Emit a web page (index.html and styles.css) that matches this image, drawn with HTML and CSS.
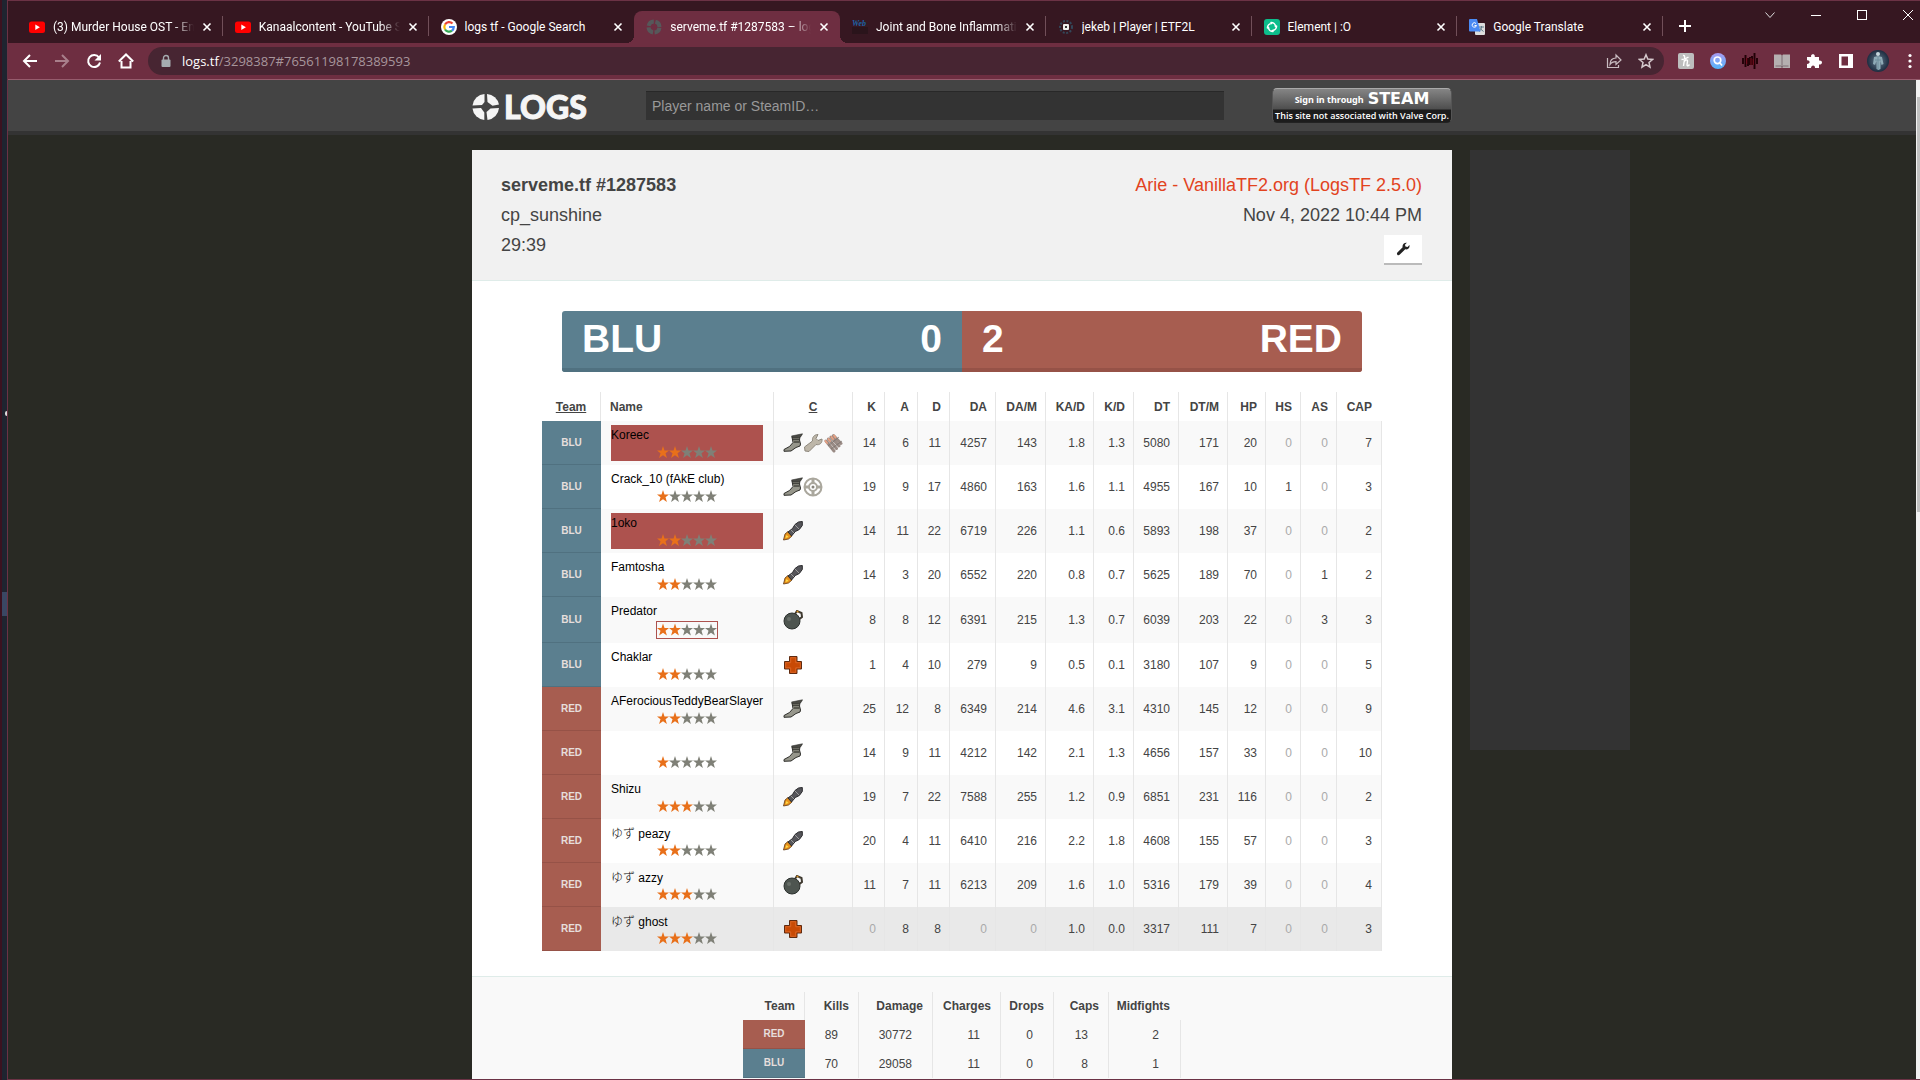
FILE: index.html
```html
<!DOCTYPE html>
<html lang="en">
<head>
<meta charset="utf-8">
<title>serveme.tf #1287583 – logs.tf</title>
<link rel="stylesheet" href="styles.css">
</head>
<body>
<svg class="defs" aria-hidden="true">
  <symbol id="x" viewBox="0 0 10 10"><path d="M1.500 1.500l7 7M8.500 1.500l-7 7" stroke="#fff" stroke-width="1.600"/></symbol>
  <symbol id="yt" viewBox="0 0 16 16"><rect y="2.500" width="16" height="11.500" rx="2.500" fill="#f00"/><path d="M6.300 5.500v5.400l4.600-2.700z" fill="#fff"/></symbol>
  <symbol id="star" viewBox="0 0 12 14"><path d="M6 .6l1.500 4.300H12L8.500 7.800 9.900 12.600 6 9.800l-3.900 2.800 1.400-4.800L0 4.900h4.500z"/></symbol>
  <symbol id="stars1" viewBox="0 0 60 14"><g fill="#e8701a"><use href="#star" width="12" height="14"/></g><g fill="#7f8077"><use href="#star" x="12" width="12" height="14"/><use href="#star" x="24" width="12" height="14"/><use href="#star" x="36" width="12" height="14"/><use href="#star" x="48" width="12" height="14"/></g></symbol>
  <symbol id="stars2" viewBox="0 0 60 14"><g fill="#e8701a"><use href="#star" width="12" height="14"/><use href="#star" x="12" width="12" height="14"/></g><g fill="#7f8077"><use href="#star" x="24" width="12" height="14"/><use href="#star" x="36" width="12" height="14"/><use href="#star" x="48" width="12" height="14"/></g></symbol>
  <symbol id="stars3" viewBox="0 0 60 14"><g fill="#e8701a"><use href="#star" width="12" height="14"/><use href="#star" x="12" width="12" height="14"/><use href="#star" x="24" width="12" height="14"/></g><g fill="#7f8077"><use href="#star" x="36" width="12" height="14"/><use href="#star" x="48" width="12" height="14"/></g></symbol>
  <symbol id="scout" viewBox="0 0 20 20"><path d="M9 4l8-1-.5 4 1 4-.5 2-4 1.500-5 3.500-7 .3v-1.800l5.500-3L10 9.500z" fill="#96968b" stroke="#2e2e2a"/><path d="M8.500 3l11-2.200L18 3.500l-2.500 1.500H9.500z" fill="#4a4a45" stroke="#2e2e2a" stroke-width=".6"/><path d="M10 6.500h6.500M11 9h5.500" stroke="#45453f" stroke-width="1.400"/></symbol>
  <symbol id="wrench" viewBox="0 0 20 20"><path d="M9.500 8c-.5-3.500 1.500-6.500 5.500-6.500l-2 4 2 2 4-1.500c.5 4-2.500 6.500-6 5.500L6 18.500l-4-.5-.5-4z" fill="#bdb6a8" stroke="#8e887d"/></symbol>
  <symbol id="shells" viewBox="0 0 20 20"><g stroke="#9a8b85" stroke-width="3" stroke-linecap="round"><path d="M3 8l8 10M5.500 6l8 9.500M8 4l8 9M10.500 2.500l7.500 8"/></g><g stroke="#e6a184" stroke-width="2" stroke-linecap="round"><path d="M2.500 8l1.500 2M5.500 6L7 8M8.500 4L10 6M11 2.500l1.500 2"/></g><path d="M5 13l11-9M8 16l11-8" stroke="#75706c" stroke-width=".7"/></symbol>
  <symbol id="sight" viewBox="0 0 20 20"><g fill="none" stroke="#aaa79d"><circle cx="10" cy="10" r="8.500" stroke-width="2"/><circle cx="10" cy="10" r="4" stroke-width="2"/><path d="M10 2v5M10 13v5M2 10h5M13 10h5" stroke-width="3"/></g><circle cx="10" cy="10" r="1.500" fill="#88857c"/></symbol>
  <symbol id="rocket" viewBox="0 0 20 20"><path d="M.5 19l1.500-6 3-2.500L9 15l-3.500 3z" fill="#e8921c" stroke="#5d3510" stroke-width=".8"/><path d="M2.500 17l1-3 2 2z" fill="#ffe14d"/><path d="M5 11l4.500-3.500L12 3.500l3.500-2.500 3.800-.5v4l-3 4-4 2L8.500 15z" fill="#55555a" stroke="#29292c"/><path d="M12 4l4 4M8 9l3 3" stroke="#9b9b9b"/></symbol>
  <symbol id="demo" viewBox="0 0 20 20"><circle cx="9" cy="11" r="8" fill="#4e5550" stroke="#2b302d"/><path d="M12 4l2-3 4.500 2 .5 4-2.500 2" fill="none" stroke="#3f3a30" stroke-width="2"/><path d="M13 2l1.500-1.500 1.500 2" fill="#e8b13c" stroke="#8b5b1c"/><circle cx="6" cy="9" r="2" fill="#69706a"/></symbol>
  <symbol id="medic" viewBox="0 0 20 20"><path d="M6.500 1.500h7.500v5h4.500V14H14v4.500H6.500V14H1.500V6.500h5z" fill="#c84a05" stroke="#5f2b10"/><path d="M7.700 2.700h5v5h4.600v5.100h-4.600v4.500h-5v-4.500h-5V7.700h5z" fill="none" stroke="#dc6a2c" stroke-width=".8"/></symbol>
</svg>
<div class="screen">
  <aside class="behind" aria-hidden="true"><i class="bud"></i><i class="block"></i></aside>
  <div class="window">
    <header class="tabstrip">
      <nav class="tabs" aria-label="Tabs">
        <a class="tab" href="#"><svg class="fav"><use href="#yt"/></svg><span class="cap fade">(3) Murder House OST - En</span><svg class="close"><use href="#x"/></svg></a>
        <a class="tab" href="#"><svg class="fav"><use href="#yt"/></svg><span class="cap fade">Kanaalcontent - YouTube S</span><svg class="close"><use href="#x"/></svg></a>
        <a class="tab plain" href="#"><svg class="fav" viewBox="0 0 16 16"><circle cx="8" cy="8" r="8" fill="#fff"/><g fill="none" stroke-width="2.200"><path d="M4 5.500a4.800 4.800 0 0 1 7.500-1" stroke="#ea4335"/><path d="M4 5.500a5 5 0 0 0 0 5" stroke="#fbbc05"/><path d="M4 10.500a4.800 4.800 0 0 0 7 1.200" stroke="#34a853"/><path d="M8 8h4.800a5 5 0 0 1-1.800 3.700" stroke="#4285f4"/></g></svg><span class="cap">logs tf - Google Search</span><svg class="close"><use href="#x"/></svg></a>
        <a class="tab active" href="#"><svg class="fav" viewBox="0 0 16 16"><g fill="none" stroke="#56585a" stroke-width="4"><circle cx="8" cy="8" r="5.500" stroke-dasharray="7 1.640" stroke-dashoffset="-.8"/></g></svg><span class="cap fade">serveme.tf #1287583 – logs</span><svg class="close"><use href="#x"/></svg></a>
        <a class="tab" href="#"><svg class="fav" viewBox="0 0 16 16"><rect y="8" width="16" height="7" fill="#2a141b"/><text x="0" y="7" class="webmd">Web</text></svg><span class="cap fade">Joint and Bone Inflammatic</span><svg class="close"><use href="#x"/></svg></a>
        <a class="tab" href="#"><svg class="fav" viewBox="0 0 16 16"><circle cx="8" cy="8" r="6" fill="none" stroke="#33485a" stroke-width="2" stroke-dasharray="2 1.500"/><rect x="5" y="5" width="6" height="6" rx="1" fill="#eee"/><rect x="7" y="7" width="2" height="2" fill="#333"/></svg><span class="cap">jekeb | Player | ETF2L</span><svg class="close"><use href="#x"/></svg></a>
        <a class="tab" href="#"><svg class="fav" viewBox="0 0 16 16"><rect width="16" height="16" rx="3" fill="#0dbd8b"/><g fill="none" stroke="#fff" stroke-width="1.600" stroke-linecap="round"><path d="M7 3.500a4.300 4.300 0 0 1 4.500 4M12.500 7a4.300 4.300 0 0 1-4 4.500M9 12.500a4.300 4.300 0 0 1-4.500-4M3.500 9a4.300 4.300 0 0 1 4-4.500"/></g></svg><span class="cap">Element | :O</span><svg class="close"><use href="#x"/></svg></a>
        <a class="tab" href="#"><svg class="fav" viewBox="0 0 16 16"><rect x="6" y="4" width="10" height="12" rx="1" fill="#ddd"/><path d="M10 8h5M12.500 7v1c0 2-1 3.500-2.500 4.500M11 9.500l3.500 3" stroke="#607d8b" fill="none"/><path d="M1 0h7l3.500 12.500H1a1 1 0 0 1-1-1V1a1 1 0 0 1 1-1z" fill="#4a8af4"/><path d="M7 4.500A2.200 2.200 0 1 0 7.500 6.500H5.500" fill="none" stroke="#fff"/></svg><span class="cap">Google Translate</span><svg class="close"><use href="#x"/></svg></a>
      </nav>
      <button class="newtab" aria-label="New tab"><svg width="14" height="14"><path d="M7 1v12M1 7h12" stroke="#fff" stroke-width="2"/></svg></button>
      <div class="winctl">
        <button aria-label="Search tabs"><svg width="12" height="12"><path d="M1.500 3.500L6 8.500l4.500-5" fill="none" stroke="#ddd"/></svg></button>
        <button aria-label="Minimize"><svg width="12" height="12"><path d="M1 6.500h10" stroke="#fff"/></svg></button>
        <button aria-label="Maximize"><svg width="12" height="12"><rect x="1.500" y="1.500" width="9" height="9" fill="none" stroke="#fff"/></svg></button>
        <button aria-label="Close"><svg width="12" height="12"><path d="M1 1l10 10M11 1L1 11" stroke="#fff"/></svg></button>
      </div>
    </header>
    <div class="toolbar">
      <button aria-label="Back"><svg viewBox="0 0 16 16"><path d="M15 8H2M8 2L2 8l6 6" fill="none" stroke="#fff" stroke-width="2"/></svg></button>
      <button aria-label="Forward"><svg viewBox="0 0 16 16"><path d="M1 8h13M8 2l6 6-6 6" fill="none" stroke="#a97f8b" stroke-width="2"/></svg></button>
      <button aria-label="Reload"><svg viewBox="0 0 16 16"><path d="M13 4.500A6 6 0 1 0 14 9.500" fill="none" stroke="#fff" stroke-width="2"/><path d="M15 1v6.500H8.500z" fill="#fff"/></svg></button>
      <button aria-label="Home"><svg viewBox="0 0 16 16"><path d="M3.500 8v6.500h9V8M.8 8.500L8 1.500l7.200 7" fill="none" stroke="#fff" stroke-width="2"/></svg></button>
      <div class="omnibox">
        <svg class="lock" viewBox="0 0 10 14"><path d="M2.500 6V4a2.500 2.500 0 0 1 5 0v2" fill="none" stroke="#a5acb0" stroke-width="1.400"/><rect x=".5" y="5.500" width="9" height="7.500" rx="1" fill="#a5acb0"/></svg>
        <span class="url"><b>logs.tf</b>/3298387#76561198178389593</span>
        <svg class="ic" viewBox="0 0 16 16"><path d="M1.500 5v9.500h11V12" fill="none" stroke="#c9bcc1" stroke-width="1.200"/><path d="M4 11.500c0-4 2-6.500 6-6.500V2l5 5-5 4.500V8.700C7.500 8.700 5.500 9 4 11.500z" fill="none" stroke="#c9bcc1" stroke-width="1.200"/></svg>
        <svg class="ic" viewBox="0 0 16 16"><path d="M8 1.800l1.800 4.300 4.700.4-3.500 3 1 4.600-4-2.500-4 2.500 1-4.600-3.500-3 4.700-.4z" fill="none" stroke="#d5c9cd" stroke-width="1.500"/></svg>
      </div>
      <div class="exts">
        <svg viewBox="0 0 16 16"><rect width="16" height="16" rx="2" fill="#bdbdbd"/><path d="M5 2.500c1.500-.5 2 1 1.500 3.500L5.500 13M6 9c1-2 3.500-3 3.500-1L9 12c.2 1.200 1.500 1 2.500-.5M3.500 6.500c2.500 0 5-1 7-2.500" fill="none" stroke="#fff" stroke-width="1.400"/></svg>
        <svg viewBox="0 0 16 16"><defs><linearGradient id="q" x2="0" y2="1"><stop stop-color="#a99af0"/><stop offset="1" stop-color="#52b4fa"/></linearGradient></defs><circle cx="8" cy="8" r="8" fill="url(#q)"/><circle cx="7.500" cy="7.300" r="3.300" fill="none" stroke="#fff" stroke-width="1.700"/><path d="M10 10l2 2.500" stroke="#fff" stroke-width="1.700"/></svg>
        <svg viewBox="0 0 16 16"><path d="M1 5v6M3.500 2v12M6 5v8M8 4v8M10 3v9M12.500 0v16M15 5v6" stroke="#210006" stroke-width="1.900"/><path d="M4.700 5v6M9 5v7M11.200 6v6" stroke="#7b0c1c"/></svg>
        <svg viewBox="0 0 16 16"><path d="M0 1.500h7l1 1 1-1h7V15H9l-1-.8L7 15H0z" fill="#b5afb0"/><path d="M1.500 13h5.500l1 1 1-1h5.500M8 2v12" fill="none" stroke="#7d6d72"/></svg>
        <svg viewBox="0 0 16 16"><path d="M1 4h4.200C4 1 9 0 8.800 3.500V4H13v3.500c4-.5 4 4.200 0 4V15H9c.3-3.500-4-3.500-4 0H1v-4c3.500 0 3.500-4 0-3.800z" fill="#fff"/></svg>
        <svg viewBox="0 0 16 16"><path d="M1 1h14v14H1zM3.500 3.500v9H10v-9z" fill="#fff" fill-rule="evenodd"/></svg>
        <svg class="avatar" viewBox="0 0 22 22"><defs><radialGradient id="av"><stop stop-color="#63798a"/><stop offset="1" stop-color="#1d2c40"/></radialGradient></defs><circle cx="11" cy="11" r="11" fill="url(#av)"/><circle cx="11" cy="4" r="2" fill="#c5d6dc"/><path d="M7 7l4-1 4 1 1.500 7-2 1-1-4v8l-2 1-2-1v-8l-1.500 4-2-1z" fill="#8fabb7"/><path d="M11 6v13M8 10h6" stroke="#6f8d9b"/></svg>
        <svg viewBox="0 0 16 16"><g fill="#fff"><circle cx="8" cy="2.500" r="1.600"/><circle cx="8" cy="8" r="1.600"/><circle cx="8" cy="13.500" r="1.600"/></g></svg>
      </div>
    </div>
    <div class="viewport">
      <div class="site">
        <header class="topbar">
          <div class="topinner">
            <a class="logo" href="#"><svg viewBox="0 0 28 28"><g fill="#f5f5f5"><path d="M12.500 1a13 13 0 0 0-12 11.500l9.500-.5 2.500-3z"/><path d="M15 1a13 13 0 0 1 12 10.500l-6.500 1.300L15.500 9z"/><path d="M.5 15.500A13 13 0 0 0 12.300 27v-7.500L9 15z"/><path d="M27 15a13 13 0 0 1-11.500 12l-1-8 4-3.500z"/></g></svg><span>LOGS</span></a>
            <input class="search" type="text" placeholder="Player name or SteamID…" aria-label="Player name or SteamID">
            <a class="steam" href="#"><span class="s1">Sign in through <b>STEAM</b></span><span class="s2">This site not associated with Valve Corp.</span></a>
          </div>
        </header>
        <div class="columns">
          <main class="card">
            <section class="info">
              <div><h1>serveme.tf #1287583</h1><p>cp_sunshine</p><p>29:39</p></div>
              <div class="right"><a href="#">Arie - VanillaTF2.org (LogsTF 2.5.0)</a><p>Nov 4, 2022 10:44 PM</p>
                <button class="tool" aria-label="Settings"><svg width="14" height="14" viewBox="0 0 20 20"><path d="M9.500 7.500c-1-3.500 2-7 6-6.500l-2.700 3 .7 2.500 3 .5 2.700-2.700c1 4-2.500 7.200-6 6.200L5.500 18c-2.500 2.500-5.500-.5-3.500-3z" fill="#222"/></svg></button></div>
            </section>
            <section class="body">
              <div class="score"><div class="blu"><span>BLU</span><span>0</span></div><div class="red"><span>2</span><span>RED</span></div></div>
              <table class="players">
                <colgroup><col class="w59"><col class="w173"><col class="w79"><col class="w32"><col class="w33"><col class="w32"><col class="w46"><col class="w50"><col class="w48"><col class="w40"><col class="w45"><col class="w49"><col class="w38"><col class="w35"><col class="w36"><col class="w45"></colgroup>
                <thead><tr><th class="c u">Team</th><th class="l">Name</th><th class="c u">C</th><th>K</th><th>A</th><th>D</th><th>DA</th><th>DA/M</th><th>KA/D</th><th>K/D</th><th>DT</th><th>DT/M</th><th>HP</th><th>HS</th><th>AS</th><th>CAP</th></tr></thead>
                <tbody>
                <tr><td class="team blu">BLU</td><td class="name"><a class="mark" href="#">Koreec<svg class="stars"><use href="#stars2"/></svg></a></td><td class="cls"><svg><use href="#scout"/></svg><svg><use href="#wrench"/></svg><svg><use href="#shells"/></svg></td><td>14</td><td>6</td><td>11</td><td>4257</td><td>143</td><td>1.8</td><td>1.3</td><td>5080</td><td>171</td><td>20</td><td class="z">0</td><td class="z">0</td><td>7</td></tr>
                <tr><td class="team blu">BLU</td><td class="name"><a href="#">Crack_10 (fAkE club)<svg class="stars"><use href="#stars1"/></svg></a></td><td class="cls"><svg><use href="#scout"/></svg><svg><use href="#sight"/></svg></td><td>19</td><td>9</td><td>17</td><td>4860</td><td>163</td><td>1.6</td><td>1.1</td><td>4955</td><td>167</td><td>10</td><td>1</td><td class="z">0</td><td>3</td></tr>
                <tr><td class="team blu">BLU</td><td class="name"><a class="mark" href="#">1oko<svg class="stars"><use href="#stars2"/></svg></a></td><td class="cls"><svg><use href="#rocket"/></svg></td><td>14</td><td>11</td><td>22</td><td>6719</td><td>226</td><td>1.1</td><td>0.6</td><td>5893</td><td>198</td><td>37</td><td class="z">0</td><td class="z">0</td><td>2</td></tr>
                <tr><td class="team blu">BLU</td><td class="name"><a href="#">Famtosha<svg class="stars"><use href="#stars2"/></svg></a></td><td class="cls"><svg><use href="#rocket"/></svg></td><td>14</td><td>3</td><td>20</td><td>6552</td><td>220</td><td>0.8</td><td>0.7</td><td>5625</td><td>189</td><td>70</td><td class="z">0</td><td>1</td><td>2</td></tr>
                <tr><td class="team blu">BLU</td><td class="name"><a href="#">Predator<svg class="stars boxed"><use href="#stars2"/></svg></a></td><td class="cls"><svg><use href="#demo"/></svg></td><td>8</td><td>8</td><td>12</td><td>6391</td><td>215</td><td>1.3</td><td>0.7</td><td>6039</td><td>203</td><td>22</td><td class="z">0</td><td>3</td><td>3</td></tr>
                <tr><td class="team blu">BLU</td><td class="name"><a href="#">Chaklar<svg class="stars"><use href="#stars2"/></svg></a></td><td class="cls"><svg><use href="#medic"/></svg></td><td>1</td><td>4</td><td>10</td><td>279</td><td>9</td><td>0.5</td><td>0.1</td><td>3180</td><td>107</td><td>9</td><td class="z">0</td><td class="z">0</td><td>5</td></tr>
                <tr><td class="team red">RED</td><td class="name"><a href="#">AFerociousTeddyBearSlayer<svg class="stars"><use href="#stars2"/></svg></a></td><td class="cls"><svg><use href="#scout"/></svg></td><td>25</td><td>12</td><td>8</td><td>6349</td><td>214</td><td>4.6</td><td>3.1</td><td>4310</td><td>145</td><td>12</td><td class="z">0</td><td class="z">0</td><td>9</td></tr>
                <tr><td class="team red">RED</td><td class="name"><a href="#">&nbsp;<svg class="stars"><use href="#stars1"/></svg></a></td><td class="cls"><svg><use href="#scout"/></svg></td><td>14</td><td>9</td><td>11</td><td>4212</td><td>142</td><td>2.1</td><td>1.3</td><td>4656</td><td>157</td><td>33</td><td class="z">0</td><td class="z">0</td><td>10</td></tr>
                <tr><td class="team red">RED</td><td class="name"><a href="#">Shizu<svg class="stars"><use href="#stars3"/></svg></a></td><td class="cls"><svg><use href="#rocket"/></svg></td><td>19</td><td>7</td><td>22</td><td>7588</td><td>255</td><td>1.2</td><td>0.9</td><td>6851</td><td>231</td><td>116</td><td class="z">0</td><td class="z">0</td><td>2</td></tr>
                <tr><td class="team red">RED</td><td class="name"><a href="#"><span><i lang="ja">ゆず</i> peazy</span><svg class="stars"><use href="#stars2"/></svg></a></td><td class="cls"><svg><use href="#rocket"/></svg></td><td>20</td><td>4</td><td>11</td><td>6410</td><td>216</td><td>2.2</td><td>1.8</td><td>4608</td><td>155</td><td>57</td><td class="z">0</td><td class="z">0</td><td>3</td></tr>
                <tr><td class="team red">RED</td><td class="name"><a href="#"><span><i lang="ja">ゆず</i> azzy</span><svg class="stars"><use href="#stars3"/></svg></a></td><td class="cls"><svg><use href="#demo"/></svg></td><td>11</td><td>7</td><td>11</td><td>6213</td><td>209</td><td>1.6</td><td>1.0</td><td>5316</td><td>179</td><td>39</td><td class="z">0</td><td class="z">0</td><td>4</td></tr>
                <tr class="hover"><td class="team red">RED</td><td class="name"><a href="#"><span><i lang="ja">ゆず</i> ghost</span><svg class="stars"><use href="#stars3"/></svg></a></td><td class="cls"><svg><use href="#medic"/></svg></td><td class="z">0</td><td>8</td><td>8</td><td class="z">0</td><td class="z">0</td><td>1.0</td><td>0.0</td><td>3317</td><td>111</td><td>7</td><td class="z">0</td><td class="z">0</td><td>3</td></tr>
                </tbody>
              </table>
            </section>
            <section class="totals">
              <table>
                <colgroup><col class="w62"><col class="w54"><col class="w74"><col class="w68"><col class="w53"><col class="w55"><col class="w72"></colgroup>
                <thead><tr><th>Team</th><th>Kills</th><th>Damage</th><th>Charges</th><th>Drops</th><th>Caps</th><th>Midfights</th></tr></thead>
                <tbody>
                <tr><td class="team red">RED</td><td>89</td><td>30772</td><td>11</td><td>0</td><td>13</td><td>2</td></tr>
                <tr><td class="team blu">BLU</td><td>70</td><td>29058</td><td>11</td><td>0</td><td>8</td><td>1</td></tr>
                </tbody>
              </table>
            </section>
          </main>
          <aside class="ad"></aside>
        </div>
      </div>
      <div class="scroll"><i></i></div>
    </div>
  </div>
</div>
</body>
</html>
```
FILE: styles.css
```css
* { box-sizing: border-box; }
body { margin: 0; font: 12px/18px "Liberation Sans", Arial, "Noto Sans CJK JP", sans-serif; color: #444; }
a { color: inherit; text-decoration: none; }
button { border: 0; padding: 0; background: none; display: flex; align-items: center; justify-content: center; }
svg { flex: none; }
h1, p { margin: 0; font-size: inherit; }
.defs { position: absolute; width: 0; height: 0; }

.screen { display: flex; height: 100vh; overflow: hidden; }
.behind { flex: 0 0 7px; background: #1f2430; border-left: 2px solid #3b1220; display: flex; flex-direction: column; align-items: flex-end; }
.bud { width: 2px; height: 5px; margin-top: 411px; background: #ddd; border-radius: 2px 0 0 2px; }
.block { width: 5px; height: 24px; margin-top: 176px; background: #3a4763; }
.window { flex: 1; min-width: 0; display: flex; flex-direction: column; border: 1px solid #6b3245; border-right: 0; }

.tabstrip { height: 42px; flex: none; background: #361721; display: flex; padding-left: 9px; font: 12px/16px Roboto, "Open Sans", sans-serif; color: #fff; }
.tabs { display: flex; flex: 0 1 1646px; padding-top: 10px; min-width: 0; }
.tab { flex: 1; min-width: 0; display: flex; align-items: center; gap: 8px; padding: 0 11px 0 12px; position: relative; }
.tab::after { content: ""; position: absolute; right: 0; top: 5px; width: 1px; height: 20px; background: #714f59; }
.tab.plain::after { display: none; }
.tab.active { background: #6e2e41; border-radius: 8px 8px 0 0; }
.tab.active::before, .tab.active::after { content: ""; position: absolute; top: auto; bottom: 0; width: 8px; height: 8px; }
.tab.active::before { left: -8px; background: radial-gradient(circle at 0 0, #361721 8px, #6e2e41 8px); }
.tab.active::after { right: -8px; background: radial-gradient(circle at 100% 0, #361721 8px, #6e2e41 8px); }
.fav { width: 16px; height: 16px; }
.webmd { font: italic bold 8px "Liberation Serif", serif; fill: #1c62a5; }
.cap { flex: 1; white-space: nowrap; overflow: hidden; }
.fade { -webkit-mask-image: linear-gradient(90deg, #000 calc(100% - 20px), transparent); mask-image: linear-gradient(90deg, #000 calc(100% - 20px), transparent); }
.close { width: 10px; height: 10px; }
.newtab { width: 44px; padding-top: 8px; }
.winctl { margin: 0 -11px 0 auto; display: flex; height: 28px; }
.winctl button { width: 46px; }

.toolbar { height: 37px; flex: none; background: #6e2e41; border-bottom: 1px solid #965c6d; display: flex; align-items: center; gap: 16px; padding: 0 2px 0 14px; }
.toolbar button, .toolbar button svg, .exts svg, .ic { width: 16px; height: 16px; }
.omnibox { flex: 1; height: 28px; border-radius: 14px; background: #472532; display: flex; align-items: center; gap: 16px; padding: 0 10px 0 13px; margin: 0 -2px; }
.lock { width: 10px; height: 14px; }
.url { flex: 1; margin-left: -5px; font: 13px/18px "Open Sans", "Noto Sans", sans-serif; color: #a8969c; }
.url b { font-weight: 400; color: #fff; }
.exts { display: flex; gap: 16px; align-items: center; }
.exts .avatar { width: 22px; height: 22px; margin: 0 -3px; }

.viewport { flex: 1; min-height: 0; display: flex; overflow: hidden; }
.site { flex: 1; min-width: 0; background: #292a24; overflow: hidden; }
.scroll { flex: 0 0 4px; background: #f1f1f1; padding: 17px 0 0 1px; }
.scroll i { display: block; height: 415px; background: #c1c1c1; }

.topbar { background: #444; border-bottom: 4px solid #333; }
.topinner { max-width: 980px; height: 51px; margin: 0 auto; display: flex; align-items: center; }
.logo { flex: 0 0 174px; display: flex; align-items: center; gap: 4px; padding-top: 2px; color: #f5f5f5; font: 900 32px/32px Lato, sans-serif; -webkit-text-stroke: 1px #f5f5f5; }
.logo svg { width: 28px; height: 28px; }
.search { flex: 0 1 578px; min-width: 0; height: 29px; border: 0; border-top: 1px solid #282828; background: #333; padding: 0 6px; color: #ccc; font: 14px "Liberation Sans", Arial, sans-serif; }
.search::placeholder { color: #999; opacity: 1; }
.steam { width: 180px; height: 35px; margin-left: auto; border: 1px solid #777; border-color: #aaa #555 #222 #555; border-radius: 5px; overflow: hidden; background: linear-gradient(#858585, #4e4e4e 20px, #1c1c1c 21px); color: #fff; text-align: center; display: flex; flex-direction: column; }
.s1 { height: 20px; display: flex; justify-content: center; gap: 4px; font: bold 9px/21px "Noto Sans", sans-serif; white-space: nowrap; }
.s1 b { font: bold 16px/20px "DejaVu Sans", sans-serif; }
.s2 { font: 600 9px/13px "Open Sans", sans-serif; white-space: nowrap; }

.columns { display: grid; grid-template-columns: 1fr minmax(0, 980px) 1fr; gap: 18px; padding-top: 15px; align-items: start; }
.card { grid-column: 2; background: #fff; }
.ad { width: 160px; height: 600px; background: #333; }
.info { display: flex; justify-content: space-between; padding: 20px 30px 20px 29px; background: #f1f1f1; border-bottom: 1px solid #dfece9; font-size: 18px; line-height: 30px; }
.right { text-align: right; display: flex; flex-direction: column; align-items: flex-end; height: 90px; }
.right a { color: #e2431e; }
.tool { width: 38px; height: 30px; flex: none; margin-top: 5px; background: #fff; border-bottom: 2px solid #bbb; }

.body { padding: 30px 0 25px; border-bottom: 1px solid #dfece9; }
.score { display: flex; max-width: 800px; margin: 0 auto 20px; color: #fff; font: bold 39px/56px "Liberation Sans", Arial, sans-serif; border-radius: 3px; overflow: hidden; }
.score div { flex: 1; height: 61px; display: flex; justify-content: space-between; padding: 0 20px; }
.blu { background: #5b7f8f; }
.red { background: #a75d50; }
.score .blu { border-bottom: 4px solid #507180; }
.score .red { border-bottom: 4px solid #965247; }

table { border-collapse: separate; border-spacing: 0; table-layout: fixed; margin: 0 auto; }
.players { width: 840px; }
.totals table { width: 438px; }
th, td { padding: 0 9px; text-align: right; border-right: 1px solid #e6e6e6; }
th { height: 29px; font-weight: bold; }
th:last-child { border-right-color: transparent; }
.players th, .players td { padding: 0 8px; }
.players th:last-child, .players td:last-child { padding-right: 9px; }
.players th.l, .players td.name { text-align: left; padding: 4px 10px; }
.players th.l { padding: 0 9px; }
.players th.c { text-align: center; }
.u { text-decoration: underline; }
.players tbody tr:nth-child(odd) { background: #f9f9f9; }
.players tbody tr.hover { background: #e9e9e9; }
.players .team, .totals .team { padding: 0; text-align: center; font-size: 10px; font-weight: bold; color: #e6dedc; border-right: 0; }
.team.blu { border-bottom: 1px solid #507180; }
.team.red { border-bottom: 1px solid #965247; }
.z { color: #aaa; }
.name a { display: flex; flex-direction: column; padding-top: 1px; color: #000; white-space: nowrap; }
.name i { font: 300 12px/18px "Noto Sans CJK JP", sans-serif; }
.name span { height: 18px; }
.mark { background: #ad524e; }
.stars { width: 60px; height: 17px; align-self: center; }
.boxed { width: 62px; height: 18px; border: 1px solid #ad524e; margin-top: 1px; }
.players .cls { text-align: left; padding: 0 0 0 9px; }
.cls svg { width: 20px; height: 20px; vertical-align: middle; }

.totals { padding-top: 15px; background: #f9f9f9; min-height: 200px; }
.totals td { height: 29px; padding-right: 20px; }
.totals th { height: 28px; padding: 0 9px 0 0; }
.totals th:last-child { padding-right: 10px; }
.totals td:last-child { padding-right: 21px; }

.w32 { width: 32px; } .w33 { width: 33px; } .w35 { width: 35px; } .w36 { width: 36px; }
.w38 { width: 38px; } .w40 { width: 40px; } .w45 { width: 45px; } .w46 { width: 46px; }
.w48 { width: 48px; } .w49 { width: 49px; } .w50 { width: 50px; } .w53 { width: 53px; }
.w54 { width: 54px; } .w55 { width: 55px; } .w59 { width: 59px; } .w62 { width: 62px; }
.w68 { width: 68px; } .w72 { width: 72px; } .w74 { width: 74px; } .w79 { width: 79px; }
.w173 { width: 173px; }
```
